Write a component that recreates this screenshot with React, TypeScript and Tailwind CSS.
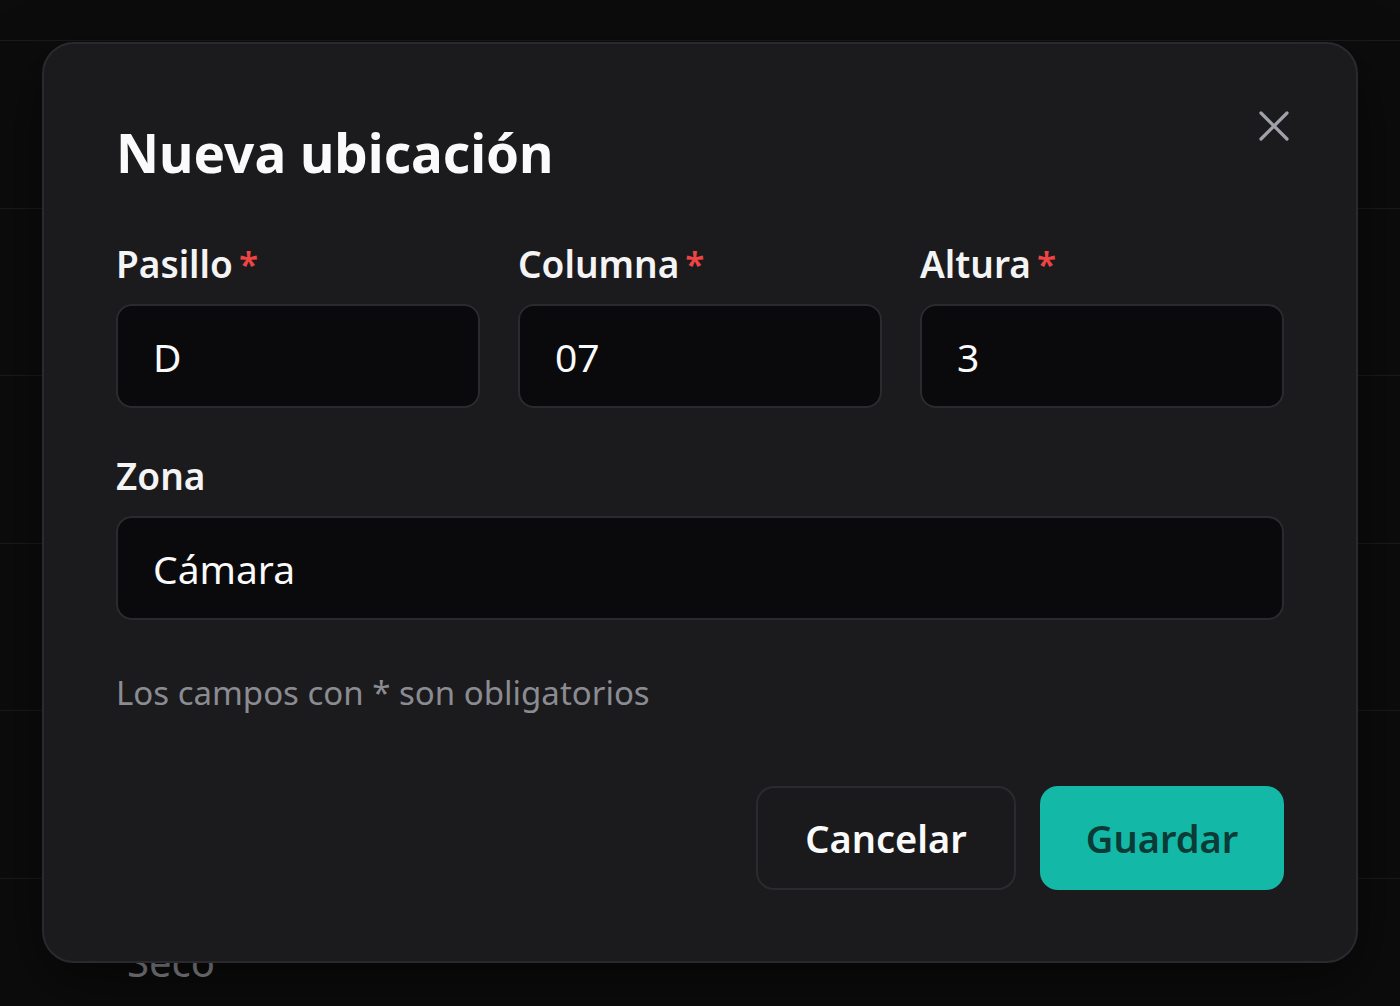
import React from "react";

const rows = ["", "", "", "", "", "Seco"];

function Label({ text, required }: { text: string; required?: boolean }) {
  return (
    <div className="flex h-[44px] items-center text-[37px] font-semibold leading-[44px] text-[#f4f4f5]">
      <span>{text}</span>
      {required && <span className="ml-[6px] text-[35px] text-[#ef4444]">*</span>}
    </div>
  );
}

function Field({ value }: { value: string }) {
  return (
    <div className="flex h-[104px] items-center rounded-[16px] border-2 border-[#2b2b2f] bg-[#0a0a0c] pl-[35px] pt-[3px] text-[39px] text-[#fafafa]">
      {value}
    </div>
  );
}

export default function App() {
  return (
    <div className="relative h-[1006px] w-[1400px] overflow-hidden bg-[#0c0c0d] font-['Noto_Sans',sans-serif]">
      <div className="flex flex-col">
        <div className="h-[41px] border-b border-[#1b1b1d]" />
        {rows.map((r, i) => (
          <div
            key={i}
            className="flex h-[167.5px] items-center border-b border-[#1b1b1d] pl-[127px] text-[40px] text-[#8e8e93]"
          >
            {r}
          </div>
        ))}
      </div>

      <div className="absolute left-[42px] top-[42px] flex w-[1316px] flex-col rounded-[32px] border-2 border-[#2a2a2e] bg-[#1b1b1e] px-[72px] pb-[71px] pt-[82px] shadow-[0_20px_60px_rgba(0,0,0,0.5)]">
        <button className="absolute right-[67px] top-[67px] text-[#a1a1aa]" aria-label="Cerrar">
          <svg width="30" height="30" viewBox="0 0 30 30" fill="none" stroke="currentColor" strokeWidth="3.2" strokeLinecap="round">
            <path d="M2 2 L28 28 M28 2 L2 28" />
          </svg>
        </button>

        <h2 className="text-[53px] font-bold leading-[53px] text-[#fafafa]">Nueva ubicación</h2>

        <div className="mt-[63px] grid grid-cols-3 gap-x-[38px]">
          <div className="flex flex-col gap-[18px]">
            <Label text="Pasillo" required />
            <Field value="D" />
          </div>
          <div className="flex flex-col gap-[18px]">
            <Label text="Columna" required />
            <Field value="07" />
          </div>
          <div className="flex flex-col gap-[18px]">
            <Label text="Altura" required />
            <Field value="3" />
          </div>
        </div>

        <div className="mt-[46px] flex flex-col gap-[18px]">
          <Label text="Zona" />
          <Field value="Cámara" />
        </div>

        <p className="mt-[53px] text-[33px] leading-[40px] text-[#8b8b92]">Los campos con * son obligatorios</p>

        <div className="mt-[73px] flex justify-end gap-[24px]">
          <button className="h-[104px] w-[260px] rounded-[18px] border-2 border-[#2b2b2f] bg-[#1a1a1d] text-[38px] font-semibold text-[#fafafa]">
            Cancelar
          </button>
          <button className="h-[104px] w-[244px] rounded-[18px] bg-[#14b8a6] text-[38px] font-semibold text-[#0b3b36]">
            Guardar
          </button>
        </div>
      </div>
    </div>
  );
}
